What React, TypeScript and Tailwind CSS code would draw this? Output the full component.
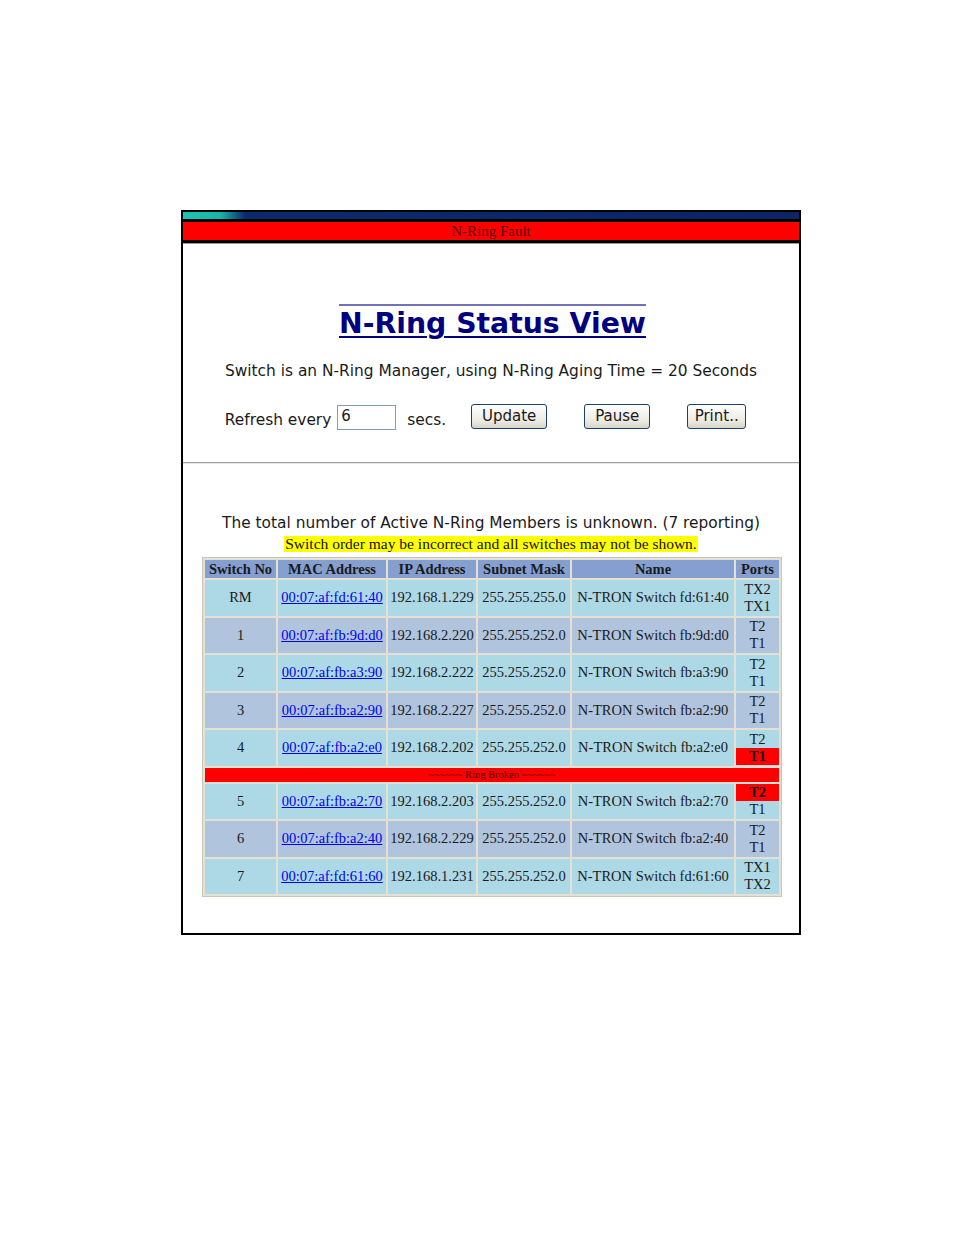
import React from 'react';

type Port = { label: string; fault?: boolean };
type Row = {
  no: string;
  mac: string;
  ip: string;
  mask: string;
  name: string;
  ports: [Port, Port];
  alt?: boolean;
};

const rowsBefore: Row[] = [
  { no: 'RM', mac: '00:07:af:fd:61:40', ip: '192.168.1.229', mask: '255.255.255.0', name: 'N-TRON Switch fd:61:40', ports: [{ label: 'TX2' }, { label: 'TX1' }] },
  { no: '1', mac: '00:07:af:fb:9d:d0', ip: '192.168.2.220', mask: '255.255.252.0', name: 'N-TRON Switch fb:9d:d0', ports: [{ label: 'T2' }, { label: 'T1' }], alt: true },
  { no: '2', mac: '00:07:af:fb:a3:90', ip: '192.168.2.222', mask: '255.255.252.0', name: 'N-TRON Switch fb:a3:90', ports: [{ label: 'T2' }, { label: 'T1' }] },
  { no: '3', mac: '00:07:af:fb:a2:90', ip: '192.168.2.227', mask: '255.255.252.0', name: 'N-TRON Switch fb:a2:90', ports: [{ label: 'T2' }, { label: 'T1' }], alt: true },
  { no: '4', mac: '00:07:af:fb:a2:e0', ip: '192.168.2.202', mask: '255.255.252.0', name: 'N-TRON Switch fb:a2:e0', ports: [{ label: 'T2' }, { label: 'T1', fault: true }] },
];

const rowsAfter: Row[] = [
  { no: '5', mac: '00:07:af:fb:a2:70', ip: '192.168.2.203', mask: '255.255.252.0', name: 'N-TRON Switch fb:a2:70', ports: [{ label: 'T2', fault: true }, { label: 'T1' }] },
  { no: '6', mac: '00:07:af:fb:a2:40', ip: '192.168.2.229', mask: '255.255.252.0', name: 'N-TRON Switch fb:a2:40', ports: [{ label: 'T2' }, { label: 'T1' }], alt: true },
  { no: '7', mac: '00:07:af:fd:61:60', ip: '192.168.1.231', mask: '255.255.252.0', name: 'N-TRON Switch fd:61:60', ports: [{ label: 'TX1' }, { label: 'TX2' }] },
];

const verdana = "font-['DejaVu_Sans',Verdana,sans-serif]";
const times = "font-['Liberation_Serif','Times_New_Roman',serif]";
const buttonClass =
  "h-[25px] rounded-[3px] border border-[#1c3f6e] bg-[linear-gradient(to_bottom,#ffffff,#ece9e0_70%,#d6d3c8)] text-[15px] leading-none text-[#1a1a1a] " +
  verdana;

function SwitchRow({ row }: { row: Row }) {
  const bg = row.alt ? 'bg-[#b0c4de]' : 'bg-[#add8e6]';
  const cell = `${bg} h-[35.5px] p-0 text-center align-middle`;
  return (
    <tr>
      <td className={cell}>{row.no}</td>
      <td className={cell}>
        <a href="#" className="text-[#0000ee] underline">
          {row.mac}
        </a>
      </td>
      <td className={cell}>{row.ip}</td>
      <td className={cell}>{row.mask}</td>
      <td className={cell}>{row.name}</td>
      <td className={`${bg} h-[35.5px] p-0 align-middle`}>
        <div className="flex flex-col">
          {row.ports.map((p, i) => (
            <div
              key={i}
              className={`h-[17px] text-center leading-[17px] ${p.fault ? 'bg-[#ff0000] font-bold text-[#111]' : ''}`}
            >
              {p.label}
            </div>
          ))}
        </div>
      </td>
    </tr>
  );
}

export default function App() {
  return (
    <div className="min-h-[1235px] bg-white pl-[181px] pt-[210px]">
      <div className="flex h-[725px] w-[620px] flex-col border-2 border-black">
        {/* header bands */}
        <div className="h-[7px] bg-[linear-gradient(to_right,#1cc4b4_0px,#19b3aa_38px,#0a2b6b_62px,#0b2566_100%)]" />
        <div className="h-[3px] bg-black" />
        <div className={`h-[18px] bg-[#ff0000] text-center text-[15px] leading-[18px] text-[#5a0000] ${times}`}>
          N-Ring Fault
        </div>
        <div className="h-[3px] bg-black" />
        <div className="h-px bg-[#9a9a9a]" />

        <div className="flex flex-col items-center pt-[63px]">
          <h1
            className={`ml-[3px] text-[28.3px] font-bold leading-[34px] text-[#000080] underline decoration-[#000080] decoration-2 underline-offset-[3px] ${verdana}`}
          >
            <span className="border-t-2 border-[#7272b8] pt-[1px]">N-Ring Status View</span>
          </h1>
          <p className={`mt-[21px] text-[15.4px] leading-[18px] text-[#1a1a1a] ${verdana}`}>
            Switch is an N-Ring Manager, using N-Ring Aging Time = 20 Seconds
          </p>
          <div className={`mr-[11px] mt-[24px] flex items-end text-[15.4px] text-[#1a1a1a] ${verdana}`}>
            <span className="mb-[1px] leading-[18px]">Refresh every</span>
            <div className="ml-[6px] flex h-[25px] w-[59px] items-start border border-[#7f9db9] bg-white px-[3px] text-[15px] leading-[20px]">
              6
            </div>
            <span className="mb-[1px] ml-[11px] leading-[18px]">secs.</span>
            <button type="button" className={`${buttonClass} mb-[1px] ml-[25px] w-[76px]`}>
              Update
            </button>
            <button type="button" className={`${buttonClass} mb-[1px] ml-[37px] w-[66px]`}>
              Pause
            </button>
            <button type="button" className={`${buttonClass} mb-[1px] ml-[37px] w-[59px]`}>
              Print..
            </button>
          </div>
        </div>

        <div className="mt-[32px] h-[2px] border-t border-b border-t-[#a0a0a0] border-b-[#e8e8e8]" />

        <div className="flex flex-col items-center pt-[50px]">
          <p className={`text-[15.4px] leading-[18px] text-[#1a1a1a] ${verdana}`}>
            The total number of Active N-Ring Members is unknown. (7 reporting)
          </p>
          <p className={`mt-[4px] bg-[#ffff00] px-[1px] text-[15.5px] leading-[16px] text-[#111] ${times}`}>
            Switch order may be incorrect and all switches may not be shown.
          </p>
          <table
            className={`ml-[2px] mt-[5px] w-[580px] border-separate border-spacing-[2px] border border-[#c9c5b8] bg-[#e4e0d4] text-[14.5px] leading-[17px] text-[#1a1a1a] ${times}`}
          >
            <colgroup>
              <col className="w-[71px]" />
              <col className="w-[108px]" />
              <col className="w-[88px]" />
              <col className="w-[92px]" />
              <col className="w-[162px]" />
              <col className="w-[43px]" />
            </colgroup>
            <thead>
              <tr>
                {['Switch No', 'MAC Address', 'IP Address', 'Subnet Mask', 'Name', 'Ports'].map((h) => (
                  <th key={h} className="h-[18px] bg-[#859fd0] p-0 text-center font-bold text-[#1a1a1a]">
                    {h}
                  </th>
                ))}
              </tr>
            </thead>
            <tbody>
              {rowsBefore.map((r) => (
                <SwitchRow key={r.no} row={r} />
              ))}
              <tr>
                <td colSpan={6} className="h-[14px] bg-[#ff0000] p-0 text-center text-[10.5px] leading-[14px] text-[#4a0000]">
                  ~~~~~~ Ring Broken ~~~~~~
                </td>
              </tr>
              {rowsAfter.map((r) => (
                <SwitchRow key={r.no} row={r} />
              ))}
            </tbody>
          </table>
        </div>
      </div>
    </div>
  );
}
